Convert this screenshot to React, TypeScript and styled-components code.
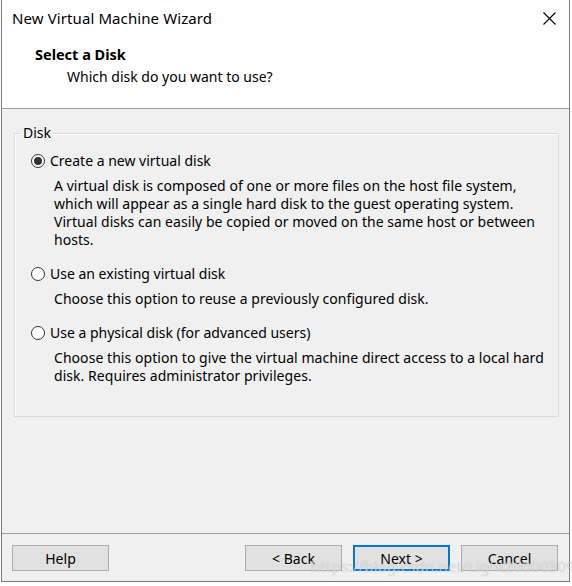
import React from "react";
import styled, { createGlobalStyle } from "styled-components";

const GlobalStyle = createGlobalStyle`
  html, body { margin: 0; padding: 0; background: #ffffff; }
  body { font-family: "Noto Sans", "Open Sans", "Liberation Sans", sans-serif; color: #000; }
  * { box-sizing: border-box; }
`;

const Window = styled.div`
  position: relative;
  margin-left: 1px;
  width: 569px;
  height: 582px;
  border: 1px solid #7a7a7a;
  border-top: none;
  display: flex;
  flex-direction: column;
  background: #f0f0f0;
  font-size: 14px;
`;

const TitleBar = styled.div`
  height: 36px;
  flex: none;
  display: flex;
  align-items: center;
  justify-content: space-between;
  padding: 0 12px 0 10px;
  background: #fff;
  font-size: 15px;
  letter-spacing: 0.1px;
`;

const CloseButton = styled.span`
  width: 13px;
  height: 13px;
  display: flex;
  margin-right: 1px;
`;

const Header = styled.div`
  height: 73px;
  flex: none;
  background: #fff;
  border-bottom: 1px solid #a0a0a0;
  padding: 8px 0 0 33px;
  display: flex;
  flex-direction: column;
`;

const HeaderTitle = styled.div`
  font-weight: bold;
  font-size: 14.5px;
  line-height: 20px;
`;

const HeaderSubtitle = styled.div`
  padding-left: 32px;
  line-height: 20px;
  margin-top: 3px;
`;

const Body = styled.div`
  flex: 1;
  padding: 14px 10px 0 12px;
`;

const GroupBox = styled.fieldset`
  margin: 0;
  padding: 0;
  min-inline-size: 0;
  height: 294px;
  border: 1px solid #d9d9d9;
  box-shadow: inset 1px 1px 0 #fff;
`;

const Legend = styled.legend`
  margin-left: 6px;
  padding: 0 2px;
  line-height: 20px;
`;

const Options = styled.div`
  padding: 8px 10px 0 16px;
  display: flex;
  flex-direction: column;
  gap: 15px;
`;

const Option = styled.div`
  display: flex;
  flex-direction: column;
  gap: 6px;
`;

const RadioRow = styled.label`
  display: flex;
  align-items: center;
  gap: 5px;
  height: 20px;
  line-height: 20px;
`;

const RadioCircle = styled.span<{ $checked?: boolean }>`
  width: 14px;
  height: 14px;
  flex: none;
  border-radius: 50%;
  border: 1px solid #333;
  background: #fff;
  display: flex;
  align-items: center;
  justify-content: center;
  &::after {
    content: "";
    width: 8px;
    height: 8px;
    border-radius: 50%;
    background: ${(p) => (p.$checked ? "#333" : "transparent")};
  }
`;

const Description = styled.div`
  padding-left: 23px;
  line-height: 18px;
  letter-spacing: 0.05px;
`;

const Footer = styled.div`
  flex: none;
  border-top: 1px solid #a0a0a0;
  height: 48px;
  padding: 11px 11px 0 10px;
  display: flex;
  align-items: flex-start;
`;

const Spacer = styled.div`
  flex: 1;
`;

const Button = styled.button<{ $primary?: boolean; $gap?: number }>`
  width: 97px;
  height: 26px;
  margin-left: ${(p) => p.$gap ?? 0}px;
  background: #e1e1e1;
  border: ${(p) => (p.$primary ? "2px solid #0078d7" : "1px solid #adadad")};
  font-family: inherit;
  font-size: 14px;
  color: #000;
  padding: 0;
`;

const Watermark = styled.div`
  position: absolute;
  left: 309px;
  top: 556px;
  font-size: 15px;
  letter-spacing: 0.2px;
  white-space: nowrap;
  color: rgba(255, 255, 255, 0.55);
  text-shadow: 0 0 1px rgba(120, 120, 120, 0.5);
  pointer-events: none;
`;

export default function App() {
  return (
    <>
      <GlobalStyle />
      <Window>
        <TitleBar>
          <span>New Virtual Machine Wizard</span>
          <CloseButton>
            <svg width="13" height="13" viewBox="0 0 13 13">
              <path d="M0.5 0.5 L12.5 12.5 M12.5 0.5 L0.5 12.5" stroke="#000" strokeWidth="1.1" fill="none" />
            </svg>
          </CloseButton>
        </TitleBar>
        <Header>
          <HeaderTitle>Select a Disk</HeaderTitle>
          <HeaderSubtitle>Which disk do you want to use?</HeaderSubtitle>
        </Header>
        <Body>
          <GroupBox>
            <Legend>Disk</Legend>
            <Options>
              <Option>
                <RadioRow>
                  <RadioCircle $checked />
                  Create a new virtual disk
                </RadioRow>
                <Description>
                  A virtual disk is composed of one or more files on the host file system,
                  <br />
                  which will appear as a single hard disk to the guest operating system.
                  <br />
                  Virtual disks can easily be copied or moved on the same host or between
                  <br />
                  hosts.
                </Description>
              </Option>
              <Option>
                <RadioRow>
                  <RadioCircle />
                  Use an existing virtual disk
                </RadioRow>
                <Description>Choose this option to reuse a previously configured disk.</Description>
              </Option>
              <Option>
                <RadioRow>
                  <RadioCircle />
                  Use a physical disk (for advanced users)
                </RadioRow>
                <Description>
                  Choose this option to give the virtual machine direct access to a local hard
                  <br />
                  disk. Requires administrator privileges.
                </Description>
              </Option>
            </Options>
          </GroupBox>
        </Body>
        <Footer>
          <Button>Help</Button>
          <Spacer />
          <Button>&lt; Back</Button>
          <Button $primary $gap={11}>Next &gt;</Button>
          <Button $gap={11}>Cancel</Button>
        </Footer>
        <Watermark>https://blog.csdn.net/Light20000309</Watermark>
      </Window>
    </>
  );
}
